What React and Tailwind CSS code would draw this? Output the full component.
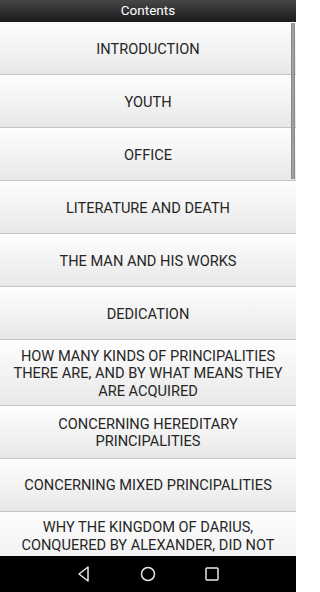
import React from 'react';

const chapters = [
  'INTRODUCTION',
  'YOUTH',
  'OFFICE',
  'LITERATURE AND DEATH',
  'THE MAN AND HIS WORKS',
  'DEDICATION',
  'HOW MANY KINDS OF PRINCIPALITIES THERE ARE, AND BY WHAT MEANS THEY ARE ACQUIRED',
  'CONCERNING HEREDITARY PRINCIPALITIES',
  'CONCERNING MIXED PRINCIPALITIES',
  'WHY THE KINGDOM OF DARIUS, CONQUERED BY ALEXANDER, DID NOT SUCCEED HIS SUCCESSORS AFTER HIS DEATH',
];

export default function App() {
  return (
    <div className="w-[296px] h-[592px] flex flex-col bg-white overflow-hidden" style={{ fontFamily: 'Roboto, "Noto Sans", sans-serif' }}>
      {/* Title bar */}
      <div className="h-[22px] shrink-0 flex items-center justify-center bg-gradient-to-b from-[#474747] to-[#1c1c1c]">
        <span className="text-[13.5px] text-white leading-none">Contents</span>
      </div>

      {/* Chapter list */}
      <div className="flex-1 relative overflow-hidden">
        <div className="flex flex-col">
          {chapters.map((title) => (
            <button
              key={title}
              className="min-h-[53px] px-2 pt-[7.5px] pb-[4.5px] flex items-center justify-center text-center text-[14.6px] leading-[17.5px] text-[#262626] bg-gradient-to-b from-[#fefefe] to-[#e8e8e8] border-b border-[#c4c4c4]"
            >
              {title}
            </button>
          ))}
        </div>
        {/* Scrollbar */}
        <div className="absolute right-[1px] top-[1px] w-[4px] h-[156px] bg-[#a0a0a0] border-x border-[#8a8a8a]" />
      </div>

      {/* Navigation bar */}
      <div className="h-[36px] shrink-0 bg-black flex items-center justify-center gap-[44px]">
        <svg width="20" height="20" viewBox="0 0 20 20" fill="none" stroke="#e8e8e8" strokeWidth="1.5" strokeLinejoin="round">
          <path d="M14 3 L5 10 L14 17 Z" />
        </svg>
        <svg width="20" height="20" viewBox="0 0 20 20" fill="none" stroke="#e8e8e8" strokeWidth="1.5">
          <circle cx="10" cy="10" r="6.5" />
        </svg>
        <svg width="20" height="20" viewBox="0 0 20 20" fill="none" stroke="#e8e8e8" strokeWidth="1.5">
          <rect x="4" y="4" width="12" height="12" rx="1" />
        </svg>
      </div>
    </div>
  );
}
